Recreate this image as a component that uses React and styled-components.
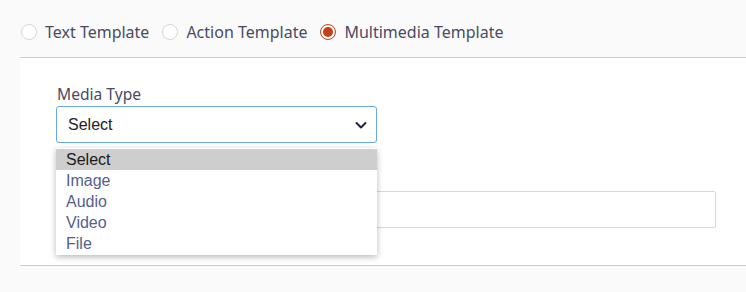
import React from "react";
import styled, { createGlobalStyle } from "styled-components";

const Global = createGlobalStyle`
  html, body { margin: 0; padding: 0; background: #fafafa; }
  body { font-family: "Noto Sans", "Open Sans", sans-serif; }
`;

const Page = styled.div`
  width: 746px;
  height: 292px;
  background: #fafafa;
  overflow: hidden;
`;

const TypeBar = styled.div`
  height: 57px;
  display: flex;
  align-items: center;
  padding-left: 21px;
  padding-top: 7px;
  box-sizing: border-box;
  gap: 13px;
`;

const RadioOption = styled.label`
  display: flex;
  align-items: center;
  gap: 8px;
  font-size: 16px;
  color: #4a4a62;
`;

const RadioCircle = styled.span`
  width: 16px;
  height: 16px;
  box-sizing: border-box;
  border-radius: 50%;
  border: 1px solid ${(p) => (p.$checked ? "#c4401a" : "#d6d6d6")};
  background: #fff;
  display: flex;
  align-items: center;
  justify-content: center;
  &::after {
    content: "";
    display: ${(p) => (p.$checked ? "block" : "none")};
    width: 10px;
    height: 10px;
    border-radius: 50%;
    background: #c4401a;
  }
`;

const Panel = styled.div`
  margin-left: 20px;
  background: #fff;
  border-top: 1px solid #cdcdcd;
  border-bottom: 1px solid #cdcdcd;
  height: 209px;
  padding: 27px 30px 0 36px;
  box-sizing: border-box;
  display: flex;
  flex-direction: column;
  gap: 27px;
`;

const Field = styled.div`
  position: relative;
  display: flex;
  flex-direction: column;
  gap: 2px;
`;

const Label = styled.div`
  font-size: 15.6px;
  line-height: 19px;
  min-height: 19px;
  color: #4a4a62;
  padding-left: 1px;
`;

const SelectBox = styled.div`
  width: 321px;
  height: 37px;
  box-sizing: border-box;
  border: 1px solid #6aa6df;
  border-radius: 3px;
  display: flex;
  align-items: center;
  justify-content: space-between;
  padding: 0 8px 0 11px;
  font-family: "Liberation Sans", Arial, sans-serif;
  font-size: 16px;
  color: #222;
  background: #fff;
`;

const TextInput = styled.div`
  width: 660px;
  height: 37px;
  box-sizing: border-box;
  border: 1px solid #d9d9d9;
  border-radius: 2px;
  background: #fff;
`;

const Dropdown = styled.ul`
  position: absolute;
  top: 63px;
  left: 0;
  width: 321px;
  margin: 0;
  padding: 1px 0 1px;
  list-style: none;
  background: #fff;
  box-shadow: 0 2px 6px rgba(0, 0, 0, 0.28);
  z-index: 10;
  font-family: "Liberation Sans", Arial, sans-serif;
  font-size: 16px;
`;

const Option = styled.li`
  height: 21px;
  line-height: 21px;
  padding-left: 10px;
  color: ${(p) => (p.$selected ? "#1a1a1a" : "#55608a")};
  background: ${(p) => (p.$selected ? "#cecece" : "transparent")};
`;

const Chevron = () => (
  <svg width="14" height="14" viewBox="0 0 14 14">
    <path d="M2.5 5 L7 9.5 L11.5 5" fill="none" stroke="#1f2340" strokeWidth="2" strokeLinecap="round" strokeLinejoin="round" />
  </svg>
);

const templates = [
  { label: "Text Template", checked: false },
  { label: "Action Template", checked: false },
  { label: "Multimedia Template", checked: true },
];

const options = ["Select", "Image", "Audio", "Video", "File"];

export default function App() {
  return (
    <Page>
      <Global />
      <TypeBar>
        {templates.map((t) => (
          <RadioOption key={t.label}>
            <RadioCircle $checked={t.checked} />
            {t.label}
          </RadioOption>
        ))}
      </TypeBar>
      <Panel>
        <Field>
          <Label>Media Type</Label>
          <SelectBox>
            Select
            <Chevron />
          </SelectBox>
          <Dropdown>
            {options.map((o, i) => (
              <Option key={o} $selected={i === 0}>{o}</Option>
            ))}
          </Dropdown>
        </Field>
        <Field>
          <Label />
          <TextInput />
        </Field>
      </Panel>
    </Page>
  );
}
